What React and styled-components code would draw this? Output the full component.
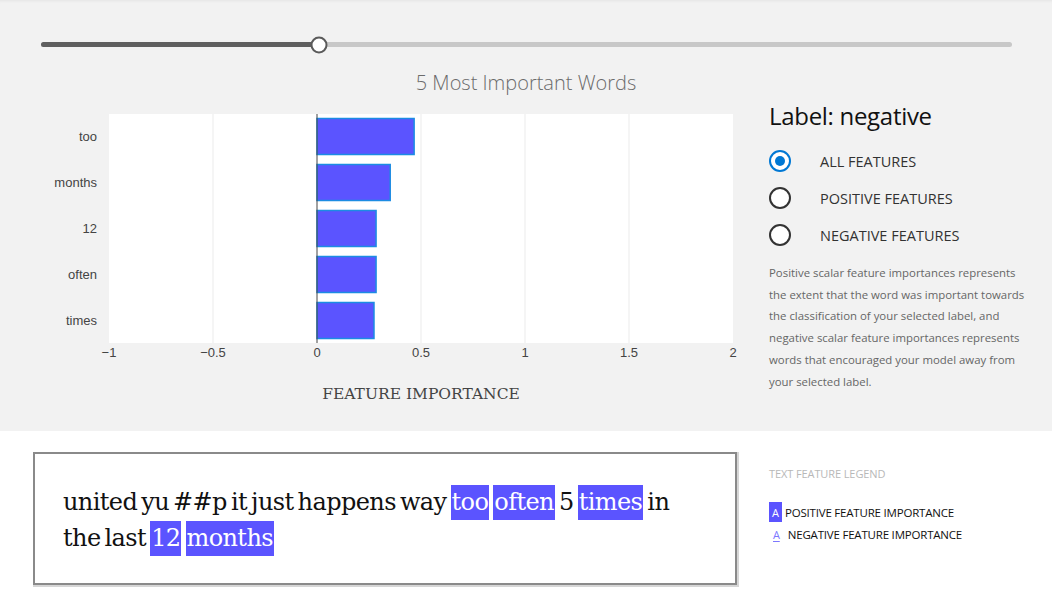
import React, { useState } from "react";
import styled, { createGlobalStyle } from "styled-components";

const GlobalStyle = createGlobalStyle`
    html, body {
        margin: 0;
        padding: 0;
        background: #ffffff;
    }
    body {
        width: 1063px;
        height: 594px;
        overflow: hidden;
        font-family: "Open Sans", "Noto Sans", sans-serif;
    }
`;

const words = [
    { word: "too", value: 0.467 },
    { word: "months", value: 0.352 },
    { word: "12", value: 0.284 },
    { word: "often", value: 0.284 },
    { word: "times", value: 0.274 },
];

const ticks = [-1, -0.5, 0, 0.5, 1, 1.5, 2];

const sentence = [
    { t: "united" }, { t: "yu" }, { t: "##p" }, { t: "it" }, { t: "just" },
    { t: "happens" }, { t: "way" }, { t: "too", hi: true }, { t: "often", hi: true },
    { t: "5" }, { t: "times", hi: true }, { t: "in" }, { t: "the" }, { t: "last" },
    { t: "12", hi: true }, { t: "months", hi: true },
];

const options = ["ALL FEATURES", "POSITIVE FEATURES", "NEGATIVE FEATURES"];

function BarChart() {
    // plot area in svg coords
    const left = 69;
    const right = 693;
    const top = 14;
    const bottom = 243;
    const scale = (right - left) / 3;
    const xOf = (v) => left + (v + 1) * scale;

    return (
        <ChartSvg width="700" height="320" viewBox="0 0 700 320">
            <rect x={left} y={top} width={right - left} height={bottom - top} fill="#ffffff" />
            {ticks.filter((t) => t !== 0 && t !== -1 && t !== 2).map((t) => (
                <line key={t} x1={xOf(t)} x2={xOf(t)} y1={top} y2={bottom} stroke="#ebebeb" strokeWidth="1" />
            ))}
            {words.map((w, i) => (
                <g key={w.word}>
                    <rect
                        x={xOf(0)}
                        y={top + 4.5 + i * 46}
                        width={w.value * scale}
                        height={36}
                        fill="#5b54ff"
                        stroke="#1c8ce3"
                        strokeWidth="1.5"
                    />
                    <text x="57" y={top + 27 + i * 46} textAnchor="end" className="label">{w.word}</text>
                </g>
            ))}
            <line x1={xOf(0)} x2={xOf(0)} y1={top} y2={bottom} stroke="#444" strokeWidth="1" />
            {ticks.map((t) => (
                <text key={t} x={xOf(t)} y="257" textAnchor="middle" className="label">
                    {t < 0 ? `\u2212${Math.abs(t)}` : t}
                </text>
            ))}
            <text x={xOf(0.5)} y="299" textAnchor="middle" className="axis">FEATURE IMPORTANCE</text>
        </ChartSvg>
    );
}

export default function App() {
    const [selected, setSelected] = useState(0);

    return (
        <Page>
            <GlobalStyle />
            <Panel>
                <SliderRow>
                    <Track>
                        <Fill style={{ width: "28.6%" }} />
                        <Thumb style={{ left: "28.6%" }} />
                    </Track>
                </SliderRow>
                <ChartTitle>5 Most Important Words</ChartTitle>
                <ContentRow>
                    <BarChart />
                    <Side>
                        <LabelTitle>Label: negative</LabelTitle>
                        <RadioGroup>
                            {options.map((o, i) => (
                                <RadioRow key={o} onClick={() => setSelected(i)}>
                                    <RadioCircle checked={selected === i} />
                                    <RadioText>{o}</RadioText>
                                </RadioRow>
                            ))}
                        </RadioGroup>
                        <Description>
                            Positive scalar feature importances represents the extent that the word was important towards the classification of your selected label, and negative scalar feature importances represents words that encouraged your model away from your selected label.
                        </Description>
                    </Side>
                </ContentRow>
            </Panel>
            <BottomRow>
                <TextBox>
                    <Sentence>
                        {sentence.map((w, i) => (
                            <React.Fragment key={i}>
                                {w.hi ? <Highlight>{w.t}</Highlight> : w.t}
                                {i < sentence.length - 1 ? " " : ""}
                            </React.Fragment>
                        ))}
                    </Sentence>
                </TextBox>
                <Legend>
                    <LegendTitle>TEXT FEATURE LEGEND</LegendTitle>
                    <LegendRow>
                        <SwatchPositive>A</SwatchPositive>
                        <span>POSITIVE FEATURE IMPORTANCE</span>
                    </LegendRow>
                    <LegendRow>
                        <SwatchNegative>A</SwatchNegative>
                        <span>NEGATIVE FEATURE IMPORTANCE</span>
                    </LegendRow>
                </Legend>
            </BottomRow>
        </Page>
    );
}

const Page = styled.div`
    width: 1063px;
    height: 594px;
    display: flex;
    flex-direction: column;
`;

const Panel = styled.div`
    width: 1052px;
    height: 431px;
    background: #f2f2f2;
    box-shadow: inset 0 3px 3px -2px rgba(0, 0, 0, 0.06);
    display: flex;
    flex-direction: column;
`;

const SliderRow = styled.div`
    padding: 42px 40px 0 41px;
    height: 5px;
`;

const Track = styled.div`
    position: relative;
    height: 5px;
    border-radius: 3px;
    background: #c8c8c8;
`;

const Fill = styled.div`
    height: 5px;
    border-radius: 3px 0 0 3px;
    background: #5f5f5f;
`;

const Thumb = styled.div`
    position: absolute;
    top: 50%;
    width: 13px;
    height: 13px;
    border-radius: 50%;
    background: #ffffff;
    border: 2px solid #5a5a5a;
    transform: translate(-50%, -50%);
`;

const ChartTitle = styled.div`
    margin-top: 24px;
    text-align: center;
    font-family: "Open Sans", sans-serif;
    font-weight: 300;
    font-size: 20px;
    line-height: 24px;
    color: #6b6b6b;
`;

const ContentRow = styled.div`
    display: flex;
    margin-top: 5px;
`;

const ChartSvg = styled.svg`
    margin-left: 40px;
    flex-shrink: 0;
    display: block;

    .label {
        font-family: "Liberation Sans", Arial, sans-serif;
        font-size: 13px;
        fill: #444444;
    }

    .axis {
        font-family: "DejaVu Serif", serif;
        font-size: 15.5px;
        fill: #444444;
    }
`;

const Side = styled.div`
    margin-left: 29px;
    width: 256px;
    display: flex;
    flex-direction: column;
`;

const LabelTitle = styled.div`
    font-family: "Open Sans", sans-serif;
    font-size: 24px;
    line-height: 32px;
    color: #111111;
    letter-spacing: -0.3px;
`;

const RadioGroup = styled.div`
    display: flex;
    flex-direction: column;
    gap: 15px;
    margin-top: 18px;
`;

const RadioRow = styled.div`
    display: flex;
    align-items: center;
    gap: 29px;
    height: 22px;
    cursor: pointer;
`;

const RadioCircle = styled.div`
    width: 18px;
    height: 18px;
    border-radius: 50%;
    border: 2px solid ${(p) => (p.checked ? "#0078d4" : "#333333")};
    background: #ffffff;
    position: relative;
    flex-shrink: 0;

    &::after {
        content: "";
        display: ${(p) => (p.checked ? "block" : "none")};
        position: absolute;
        left: 50%;
        top: 50%;
        width: 10px;
        height: 10px;
        border-radius: 50%;
        background: #0078d4;
        transform: translate(-50%, -50%);
    }
`;

const RadioText = styled.span`
    font-family: "Open Sans", sans-serif;
    font-size: 14.5px;
    color: #323232;
`;

const Description = styled.p`
    margin: 16px 0 0;
    font-family: "Open Sans", sans-serif;
    font-size: 11.4px;
    line-height: 21.7px;
    color: #666666;
`;

const BottomRow = styled.div`
    display: flex;
    padding-top: 21px;
`;

const TextBox = styled.div`
    margin-left: 33px;
    width: 700px;
    height: 129px;
    border: 2px solid #8a8a8a;
    box-shadow: 1px 1px 0 1px #d6d6d6;
    background: #ffffff;
    box-sizing: content-box;
`;

const Sentence = styled.div`
    padding: 30px 28px 0 28px;
    font-family: "DejaVu Serif", serif;
    font-size: 24px;
    line-height: 36px;
    color: #111111;
    letter-spacing: -0.6px;
    word-spacing: -3px;
`;

const Highlight = styled.span`
    background: #5b54ff;
    color: #ffffff;
    padding: 3px 1px 4px;
`;

const Legend = styled.div`
    margin-left: 32px;
    padding-top: 14px;
    display: flex;
    flex-direction: column;
    font-family: "Open Sans", sans-serif;
`;

const LegendTitle = styled.div`
    font-size: 11px;
    color: #b8b8b8;
    margin-bottom: 20px;
    letter-spacing: -0.1px;
`;

const LegendRow = styled.div`
    display: flex;
    align-items: center;
    height: 22px;
    font-size: 11.5px;
    color: #111111;
    letter-spacing: -0.2px;
`;

const SwatchPositive = styled.span`
    display: inline-flex;
    align-items: center;
    justify-content: center;
    width: 13px;
    height: 20px;
    background: #5b54ff;
    color: #ffffff;
    font-size: 11px;
    margin-right: 3px;
`;

const SwatchNegative = styled.span`
    display: inline-block;
    margin: 0 8px 0 4px;
    font-size: 11px;
    color: #7d78ff;
    text-decoration: underline;
    text-underline-offset: 2px;
`;
